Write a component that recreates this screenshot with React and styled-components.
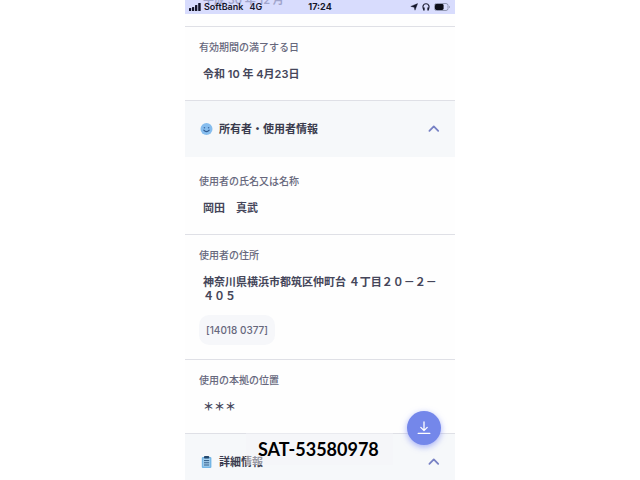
import React from 'react';
import styled, { createGlobalStyle } from 'styled-components';

const App = () => {
    return (
        <>
            <GlobalStyle />
            <Screen>
                <StatusBar>
                    <Carrier>
                        <SignalIcon />
                        <span>SoftBank</span>
                        <span>4G</span>
                    </Carrier>
                    <Clock>17:24</Clock>
                    <Indicators>
                        <LocationIcon />
                        <HeadphonesIcon />
                        <BatteryIcon />
                    </Indicators>
                </StatusBar>

                <Content>
                    <Field>
                        <Value>平成 30 年 12 月</Value>
                    </Field>
                    <Field>
                        <Label>有効期間の満了する日</Label>
                        <Value>令和 10 年 4月23日</Value>
                    </Field>

                    <SectionHeader type="button">
                        <SmileIcon />
                        <SectionTitle>所有者・使用者情報</SectionTitle>
                        <ChevronIcon />
                    </SectionHeader>
                    <Field>
                        <Label>使用者の氏名又は名称</Label>
                        <Value>岡田　真武</Value>
                    </Field>
                    <Field>
                        <Label>使用者の住所</Label>
                        <Value>神奈川県横浜市都筑区仲町台 ４丁目２０－２－４０５</Value>
                        <Code>[14018 0377]</Code>
                    </Field>
                    <Field>
                        <Label>使用の本拠の位置</Label>
                        <Value>＊＊＊</Value>
                    </Field>

                    <SectionHeader type="button">
                        <ClipboardIcon />
                        <SectionTitle>詳細情報</SectionTitle>
                        <ChevronIcon />
                    </SectionHeader>
                </Content>

                <Stamp>SAT-53580978</Stamp>
                <DownloadButton type="button" aria-label="ダウンロード">
                    <DownloadIcon />
                </DownloadButton>
            </Screen>
        </>
    );
};

export default App;

// Icons
const SignalIcon = () => (
    <svg width="12" height="8" viewBox="0 0 12 8" fill="#15162a">
        <rect x="0" y="5" width="2.2" height="3" rx="0.5" />
        <rect x="3" y="4" width="2.2" height="4" rx="0.5" />
        <rect x="6" y="2" width="2.3" height="6" rx="0.5" />
        <rect x="9.2" y="0" width="2.5" height="8" rx="0.5" />
    </svg>
);

const LocationIcon = () => (
    <svg width="8" height="8" viewBox="0 0 8 8" fill="#15162a">
        <path d="M7.6 0.6 L5 7.2 L4.2 4.2 L0.8 3.4 Z" stroke="#15162a" strokeWidth="0.4" strokeLinejoin="round" />
    </svg>
);

const HeadphonesIcon = () => (
    <svg width="8" height="8" viewBox="0 0 8 8" fill="none" stroke="#15162a">
        <path d="M1.6 6.4 C0.2 3.4 1.2 0.8 4 0.8 C6.8 0.8 7.8 3.4 6.4 6.4" strokeWidth="1.1" />
        <path d="M1.9 4.6 V7.4 M6.1 4.6 V7.4" strokeWidth="1.5" />
    </svg>
);

const BatteryIcon = () => (
    <svg width="17" height="8" viewBox="0 0 17 8">
        <rect x="0.5" y="0.5" width="13.5" height="7" rx="2" fill="none" stroke="#9298b4" />
        <rect x="1" y="1" width="8.6" height="6" rx="1.4" fill="#0c0d18" />
        <path d="M15 2.7 C16.2 3.1 16.2 4.9 15 5.3 Z" fill="#9298b4" />
    </svg>
);

const SmileIcon = () => (
    <svg width="13" height="13" viewBox="0 0 13 13">
        <circle cx="6.5" cy="6" r="6" fill="#86bdee" />
        <circle cx="4.4" cy="4.8" r="0.8" fill="#3d6ba3" />
        <circle cx="8.6" cy="4.8" r="0.8" fill="#3d6ba3" />
        <path d="M3.8 7.2 Q6.5 10.2 9.2 7.2" fill="none" stroke="#2f5b92" strokeWidth="1.2" strokeLinecap="round" />
    </svg>
);

const ClipboardIcon = () => (
    <svg width="13" height="13" viewBox="0 0 13 13">
        <rect x="1.8" y="1" width="9.6" height="11" rx="1" fill="#74b6e6" />
        <rect x="3.2" y="2.4" width="6.8" height="8.2" fill="#a5d0ee" />
        <rect x="4" y="0" width="5.2" height="2.6" rx="0.8" fill="#24496e" />
        <path d="M4 4.6 H9.2 M4 6.8 H9.2 M4 9 H9.2" stroke="#2f5b86" strokeWidth="1" />
    </svg>
);

const ChevronIcon = () => (
    <svg width="12" height="8" viewBox="0 0 12 8" fill="none">
        <path d="M1.4 5.8 L5.8 1.4 L10.2 5.8" stroke="#7781c4" strokeWidth="1.8" strokeLinecap="round" strokeLinejoin="round" />
    </svg>
);

const DownloadIcon = () => (
    <svg width="14" height="14" viewBox="0 0 14 14" fill="none" stroke="#ffffff" strokeWidth="1.3" strokeLinecap="round" strokeLinejoin="round">
        <path d="M7 1 V9.4 M3.8 6.4 L7 9.6 L10.2 6.4 M1.2 12.4 H12.8" />
    </svg>
);

// Styled Components
const GlobalStyle = createGlobalStyle`
    * {
        box-sizing: border-box;
    }

    body {
        margin: 0;
        background-color: #ffffff;
        font-family: Inter, 'Noto Sans CJK JP', sans-serif;
    }

    svg {
        display: block;
        flex-shrink: 0;
    }
`;

const Screen = styled.main`
    position: relative;
    width: 100%;
    max-width: 270px;
    height: 100vh;
    margin: 0 auto;
    overflow: hidden;
    background-color: #fefefe;
`;

const StatusBar = styled.header`
    position: absolute;
    top: 0;
    left: 0;
    right: 0;
    z-index: 1;
    display: grid;
    grid-template-columns: 1fr auto 1fr;
    align-items: center;
    height: 14px;
    padding: 0 4px;
    background-color: rgba(200, 205, 252, 0.7);
    color: #15162a;
    font-size: 9px;
    line-height: 14px;
    font-weight: 600;
`;

const Carrier = styled.div`
    display: flex;
    align-items: center;
    gap: 3px;

    span + span {
        margin-left: 3px;
    }
`;

const Clock = styled.time`
    font-weight: 700;
`;

const Indicators = styled.div`
    display: flex;
    align-items: center;
    justify-content: flex-end;
    gap: 4px;
`;

const Content = styled.div`
    margin-top: -20px;
`;

const Field = styled.section`
    padding: 13px 14px 19px;
    border-bottom: 1px solid #dfe0e6;

    &:has(${() => Code}) {
        padding-bottom: 14px;
    }
`;

const Label = styled.h3`
    margin: 0 0 13px;
    color: #66677c;
    font-size: 10px;
    line-height: 14px;
    font-weight: 500;
`;

const Value = styled.p`
    margin: 0;
    padding: 0 4px;
    color: #45465a;
    font-size: 11px;
    line-height: 14px;
    font-weight: 600;
`;

const Code = styled.span`
    display: inline-block;
    margin-top: 12px;
    padding: 8px 7px;
    border-radius: 10px;
    background-color: #f6f7fa;
    color: #66677c;
    font-size: 10px;
    line-height: 14px;
    font-weight: 500;
    vertical-align: top;
`;

const SectionHeader = styled.button`
    display: flex;
    align-items: center;
    gap: 6px;
    width: 100%;
    height: 56px;
    margin-bottom: 4px;
    padding: 0 15px;
    border: 0;
    background-color: #f6f8fa;
    font-family: inherit;
    text-align: left;
`;

const SectionTitle = styled.span`
    flex: 1;
    color: #3a3b4d;
    font-size: 11px;
    line-height: 14px;
    font-weight: 700;
`;

const Stamp = styled.div`
    position: absolute;
    bottom: 15px;
    left: 61px;
    padding: 0 14px 0 12px;
    background-color: rgba(244, 244, 247, 0.5);
    color: #000000;
    font-family: Lato, sans-serif;
    font-size: 18px;
    line-height: 32px;
    font-weight: 700;
`;

const DownloadButton = styled.button`
    position: absolute;
    right: 14px;
    bottom: 35px;
    display: flex;
    align-items: center;
    justify-content: center;
    width: 34px;
    height: 34px;
    padding: 0;
    border: 0;
    border-radius: 50%;
    background-color: #7487ea;
    box-shadow: 0 2px 6px rgba(110, 125, 245, 0.6);
`;
